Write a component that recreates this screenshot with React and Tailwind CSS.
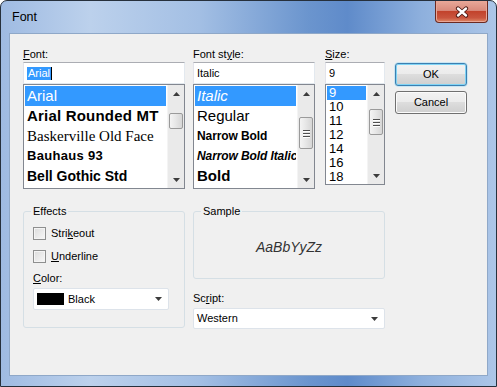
import React from 'react';

const ui = "font-['Liberation_Sans',Arial,sans-serif]";

const Arrow = ({ down }) => (
  <svg width="7" height="4" viewBox="0 0 7 4">
    <polygon points={down ? '0,0 7,0 3.5,4' : '0,4 7,4 3.5,0'} fill="#3c3c3c" />
  </svg>
);

const ScrollBar = ({ thumbTop, thumbH, grip }) => (
  <div className="w-[17px] h-full flex flex-col bg-[#eaeaea] border-l border-[#f4f4f4]">
    <div className="h-[17px] flex items-center justify-center"><Arrow /></div>
    <div className="flex-1">
      <div
        className={`mx-[1px] rounded-[2px] border border-[#9a9a9a] bg-[linear-gradient(90deg,#f4f4f4,#e6e6e6_50%,#d6d6d6)] flex flex-col items-center justify-center gap-[2px] ${thumbTop} ${thumbH}`}
      >
        {grip && [0, 1, 2].map((i) => (
          <div key={i} className="w-[7px] h-[1px] bg-[#4f4f4f] shadow-[0_1px_0_#fff]" />
        ))}
      </div>
    </div>
    <div className="h-[17px] flex items-center justify-center"><Arrow down /></div>
  </div>
);

const ListBox = ({ items, className, row, thumbTop, thumbH, grip }) => (
  <div className={`flex border border-[#828790] bg-white ${className}`}>
    <div className="flex-1 min-w-0 overflow-hidden p-[1px]">
      {items.map((it) => (
        <div
          key={it.text}
          className={`${row} pl-[2px] whitespace-nowrap overflow-hidden ${it.cls} ${it.sel ? 'bg-[#3399ff] text-white' : 'text-black'}`}
        >
          {it.text}
        </div>
      ))}
    </div>
    <ScrollBar thumbTop={thumbTop} thumbH={thumbH} grip={grip} />
  </div>
);

const TextBox = ({ children, className = '' }) => (
  <div className={`h-[22px] flex items-center pl-[3px] bg-white border border-[#e3e9ef] border-t-[#abadb3] border-l-[#e2e3ea] text-[11px] text-black ${className}`}>
    {children}
  </div>
);

const Label = ({ children, className = '' }) => (
  <div className={`h-[16px] leading-[16px] text-[11px] text-black ${className}`}>{children}</div>
);

const Combo = ({ children, className }) => (
  <div className={`flex items-center bg-white border border-[#dde3ea] rounded-[2px] text-[11px] ${className}`}>
    <div className="flex-1 flex items-center">{children}</div>
    <div className="w-[20px] flex justify-center"><Arrow down /></div>
  </div>
);

const Check = ({ children }) => (
  <div className="h-[17px] flex items-center gap-[5px] text-[11px]">
    <div className="w-[13px] h-[13px] border border-[#8e8f8f] bg-[linear-gradient(135deg,#dcdcdc,#f7f7f7)] shadow-[inset_0_0_0_1px_#f4f4f4]" />
    <span>{children}</span>
  </div>
);

const Group = ({ title, className, children }) => (
  <div className={`relative border border-[#d5dfe5] rounded-[3px] ${className}`}>
    <span className="absolute -top-[8px] left-[7px] px-[2px] bg-[#f0f0f0] text-[11px] leading-[14px]">{title}</span>
    {children}
  </div>
);

const Button = ({ children, primary }) => (
  <div
    className={`w-[72px] h-[23px] flex items-center justify-center rounded-[3px] border text-[11px] text-black bg-[linear-gradient(#f2f2f2,#ebebeb_50%,#dddddd_50%,#cfcfcf)] ${primary ? 'border-[#3c7fb1] shadow-[inset_0_0_0_1px_#7fd4f5,0_0_0_0.5px_#9fdcf5]' : 'border-[#707070] shadow-[inset_0_0_0_1px_#fbfbfb]'}`}
  >
    {children}
  </div>
);

const fonts = [
  { text: 'Arial', cls: 'text-[15px]', sel: true },
  { text: 'Arial Rounded MT', cls: 'text-[15px] font-bold tracking-[0.2px]' },
  { text: 'Baskerville Old Face', cls: "text-[15px] font-['Liberation_Serif',serif]" },
  { text: 'Bauhaus 93', cls: 'text-[13px] font-black tracking-[0.3px]' },
  { text: 'Bell Gothic Std', cls: 'text-[14px] font-bold' },
];

// no Arial Narrow here, so a smaller bold stands in for it
const styles = [
  { text: 'Italic', cls: 'text-[15px] italic text-[#eaf3ff]', sel: true },
  { text: 'Regular', cls: 'text-[15px]' },
  { text: 'Narrow Bold', cls: 'text-[12px] font-bold tracking-[-0.1px]' },
  { text: 'Narrow Bold Italic', cls: 'text-[12px] font-bold italic tracking-[-0.1px]' },
  { text: 'Bold', cls: 'text-[15px] font-bold' },
];

const sizes = ['9', '10', '11', '12', '14', '16', '18'].map((s, i) => ({ text: s, cls: 'text-[13px]', sel: i === 0 }));

const App = () => {
  return (
    <div className={`w-[497px] h-[387px] bg-white ${ui}`}>
      <div className="h-full flex flex-col rounded-t-[7px] border border-[#26303c] px-[8px] pb-[10px] bg-[linear-gradient(90deg,#9fbbe2,#bcd1ec_18%,#a3bfe4_40%,#6b95ce_62%,#5f8bca_70%,#8eb0dd_85%,#acc6e8)]">

        <div className="h-[32px] flex justify-between items-start">
          <div className="pl-[3px] pt-[9px] text-[12.5px] leading-[14px] text-black">Font</div>
          <div className="w-[53px] h-[22px] flex items-center justify-center rounded-b-[4px] border border-t-0 border-[#6b2a22] bg-[linear-gradient(#e8a899,#d98b7c_45%,#c2432c_50%,#c9553e_80%,#de8a68)] shadow-[inset_0_0_0_1px_#e9a797]">
            <svg width="14" height="12" viewBox="0 0 14 12">
              <path d="M3 2.5L11 9.5M11 2.5L3 9.5" stroke="#4a1711" strokeWidth="4.2" strokeLinecap="round" />
              <path d="M3 2.5L11 9.5M11 2.5L3 9.5" stroke="#ffffff" strokeWidth="2.4" strokeLinecap="round" />
            </svg>
          </div>
        </div>

        <div className="flex-1 bg-[#f0f0f0] border border-[#8fa8c8] pl-[13px] pt-[12px] text-black">

          <div className="flex">
            <div className="w-[162px]">
              <Label><span className="underline">F</span>ont:</Label>
              <TextBox>
                <span className="bg-[#3399ff] text-white leading-[13px] px-[1px]">Arial</span>
                <span className="w-[1px] h-[13px] bg-black" />
              </TextBox>
              <ListBox items={fonts} className="h-[105px]" row="h-[20px] leading-[20px]" thumbTop="mt-[11px]" thumbH="h-[16px]" />
            </div>

            <div className="w-[122px] ml-[8px]">
              <Label>Font st<span className="underline">y</span>le:</Label>
              <TextBox>Italic</TextBox>
              <ListBox items={styles} className="h-[105px]" row="h-[20px] leading-[20px]" thumbTop="mt-[15px]" thumbH="h-[32px]" grip />
            </div>

            <div className="w-[60px] ml-[10px]">
              <Label><span className="underline">S</span>ize:</Label>
              <TextBox>9</TextBox>
              <ListBox items={sizes} className="h-[101px]" row="h-[14px] leading-[14px]" thumbTop="mt-[7px]" thumbH="h-[26px]" grip />
            </div>

            <div className="ml-[10px] pt-[17px] flex flex-col gap-[5px]">
              <Button primary>OK</Button>
              <Button>Cancel</Button>
            </div>
          </div>

          <div className="flex mt-[22px]">
            <Group title="Effects" className="w-[162px] h-[117px] pl-[9px] pt-[13px]">
              <Check>Stri<span className="underline">k</span>eout</Check>
              <div className="mt-[6px]"><Check><span className="underline">U</span>nderline</Check></div>
              <Label className="mt-[5px]"><span className="underline">C</span>olor:</Label>
              <Combo className="w-[136px] h-[22px] mt-[2px]">
                <div className="ml-[3px] w-[27px] h-[12px] bg-black" />
                <span className="ml-[4px]">Black</span>
              </Combo>
            </Group>

            <div className="w-[192px] ml-[8px]">
              <Group title="Sample" className="h-[68px] flex items-center justify-center">
                <span className="text-[14px] italic text-[#333] mt-[5px]">AaBbYyZz</span>
              </Group>
              <Label className="mt-[11px]">Sc<span className="underline">r</span>ipt:</Label>
              <Combo className="h-[21px] mt-[2px]">
                <span className="ml-[3px]">Western</span>
              </Combo>
            </div>
          </div>

        </div>
      </div>
    </div>
  );
};

export default App;
